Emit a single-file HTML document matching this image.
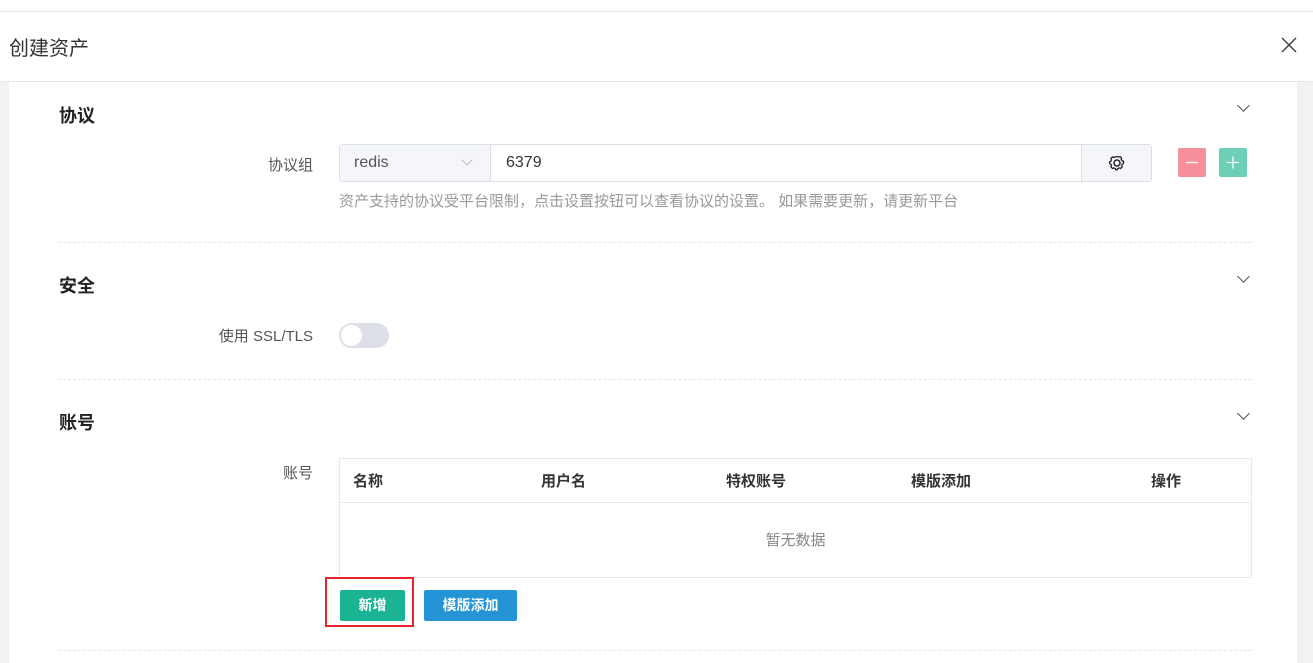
<!DOCTYPE html><html><head><meta charset="utf-8"><style>
*{margin:0;padding:0;box-sizing:border-box}
body{width:1313px;height:663px;overflow:hidden;background:#fff;font-family:"Liberation Sans","Noto Sans CJK SC",sans-serif;color:#333;position:relative}
.a{position:absolute}
.h{font-size:18px;font-weight:bold;color:#222}
.lab{font-size:15px;color:#555;text-align:right;width:120px}
.dash{border-top:1px dashed #e5e5e5;left:58px;width:1194px;height:0}
.chev{width:9px;height:9px;border-right:1.3px solid #555;border-bottom:1.3px solid #555;transform:rotate(45deg)}
</style></head><body>
<div class="a" style="top:11px;left:0;width:1313px;border-top:1px solid #e4e4e4"></div>
<div class="a" style="top:32px;left:9px;font-size:20px;color:#333">创建资产</div>
<div class="a" style="top:36px;left:1281px;width:16px;height:18px">
<svg width="16" height="18"><path d="M1 2L15 16M15 2L1 16" stroke="#444" stroke-width="1.5"/></svg></div>
<div class="a" style="top:81px;left:0;width:1313px;border-top:1px solid #e4e4e4"></div>
<div class="a" style="top:82px;left:0;width:9px;height:581px;background:#f2f2f2"></div>
<div class="a" style="top:82px;left:1297px;width:16px;height:581px;background:#f2f2f2"></div>

<div class="a h" style="top:102px;left:59px">协议</div>
<div class="a chev" style="top:101px;left:1239px"></div>
<div class="a lab" style="top:154px;left:193px">协议组</div>
<div class="a" style="top:144px;left:339px;width:813px;height:38px;border:1px solid #dcdfe6;border-radius:3px;display:flex">
 <div style="width:151px;background:#f5f6fa;border-right:1px solid #dcdfe6;font-size:16px;color:#555;padding:9px 14px 0;position:relative">redis<div class="chev" style="position:absolute;left:123px;top:11px;border-color:#bbb;width:8px;height:8px"></div></div>
 <div style="flex:1;font-size:16px;color:#333;padding:9px 15px 0">6379</div>
 <div style="width:70px;background:#f5f6fa;border-left:1px solid #dcdfe6;display:flex;align-items:center;justify-content:center">
 <svg width="18" height="18" viewBox="0 0 18 18"><circle cx="9" cy="9" r="3" fill="none" stroke="#222" stroke-width="1.5"/><path d="M9 2.5l1.6.6 1.4-.6 1.6 1.6-.4 1.5 1 1.2 1.3.4v2.3l-1.3.6-.6 1.4.6 1.4-1.6 1.6-1.4-.6-1.4.6-.6 1.3H7.9l-.6-1.3-1.4-.6-1.4.6-1.6-1.6.6-1.4-.6-1.4-1.3-.6V7.9l1.3-.6.6-1.4-.6-1.4 1.6-1.6 1.4.6 1.4-.6z" fill="none" stroke="#222" stroke-width="1.3"/></svg></div>
</div>
<div class="a" style="top:148px;left:1178px;width:28px;height:29px;background:#f5909b;border-radius:2px"><svg width="28" height="29"><path d="M8 14.5h12" stroke="#fff" stroke-width="1.3"/></svg></div>
<div class="a" style="top:148px;left:1219px;width:28px;height:29px;background:#6ccfb6;border-radius:2px"><svg width="28" height="29"><path d="M8 14.5h12M14 8.5v12" stroke="#fff" stroke-width="1.3"/></svg></div>
<div class="a" style="top:190px;left:339px;font-size:15px;color:#999">资产支持的协议受平台限制，点击设置按钮可以查看协议的设置。 如果需要更新，请更新平台</div>
<div class="a dash" style="top:242px"></div>

<div class="a h" style="top:272px;left:59px">安全</div>
<div class="a chev" style="top:272px;left:1239px"></div>
<div class="a lab" style="top:325px;left:193px">使用 SSL/TLS</div>
<div class="a" style="top:323px;left:339px;width:50px;height:25px;background:#dcdfe6;border-radius:13px"><div style="position:absolute;left:2px;top:2px;width:21px;height:21px;border-radius:50%;background:#fff"></div></div>
<div class="a dash" style="top:379px"></div>

<div class="a h" style="top:409px;left:59px">账号</div>
<div class="a chev" style="top:409px;left:1239px"></div>
<div class="a lab" style="top:462px;left:193px">账号</div>
<div class="a" style="top:458px;left:339px;width:913px;height:120px;border:1px solid #e6e8ee">
 <div style="height:44px;border-bottom:1px solid #e6e8ee;font-size:15px;font-weight:bold;color:#333;position:relative">
 <span class="a" style="left:13px;top:11px">名称</span><span class="a" style="left:201px;top:11px">用户名</span><span class="a" style="left:386px;top:11px">特权账号</span><span class="a" style="left:571px;top:11px">模版添加</span><span class="a" style="left:811px;top:11px">操作</span></div>
 <div style="text-align:center;font-size:15px;color:#888;padding-top:26px">暂无数据</div>
</div>
<div class="a" style="top:577px;left:325px;width:89px;height:50px;border:2px solid #e8242b"></div>
<div class="a" style="top:590px;left:340px;width:65px;height:31px;background:#1ab394;border-radius:2px;color:#fff;font-size:14px;font-weight:bold;text-align:center;line-height:31px">新增</div>
<div class="a" style="top:590px;left:424px;width:93px;height:31px;background:#2494d6;border-radius:2px;color:#fff;font-size:14px;font-weight:bold;text-align:center;line-height:31px">模版添加</div>
<div class="a dash" style="top:650px"></div>
</body></html>
